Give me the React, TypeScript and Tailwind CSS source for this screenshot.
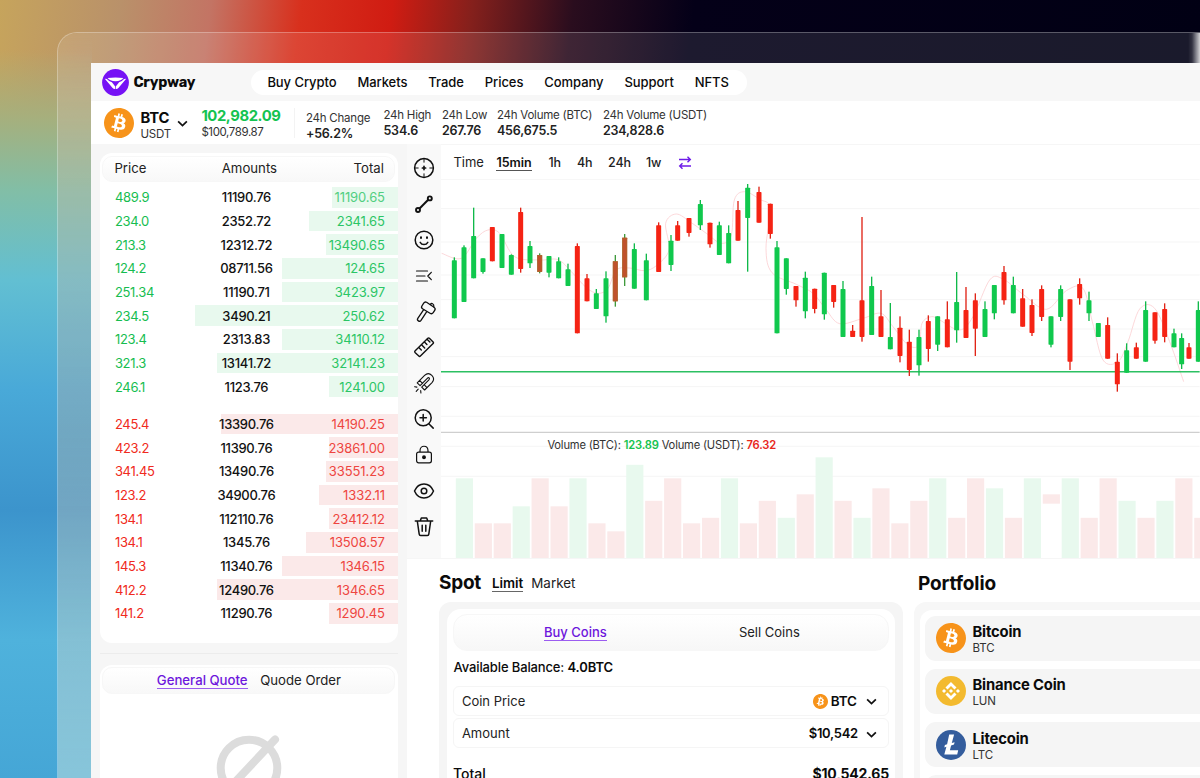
import React from 'react';
import { SiBinance, SiBitcoin } from 'react-icons/si';

type Side = 'g' | 'r' | 'm';

interface Order {
  price: string;
  amount: string;
  total: string;
  depth: number;
}

const navItems = ['Buy Crypto', 'Markets', 'Trade', 'Prices', 'Company', 'Support', 'NFTS'];

const bids: Order[] = [
  { price: '489.9', amount: '11190.76', total: '11190.65', depth: 66 },
  { price: '234.0', amount: '2352.72', total: '2341.65', depth: 89 },
  { price: '213.3', amount: '12312.72', total: '13490.65', depth: 72 },
  { price: '124.2', amount: '08711.56', total: '124.65', depth: 116 },
  { price: '251.34', amount: '11190.71', total: '3423.97', depth: 116 },
  { price: '234.5', amount: '3490.21', total: '250.62', depth: 203 },
  { price: '123.4', amount: '2313.83', total: '34110.12', depth: 116 },
  { price: '321.3', amount: '13141.72', total: '32141.23', depth: 181 },
  { price: '246.1', amount: '1123.76', total: '1241.00', depth: 69 },
];

const asks: Order[] = [
  { price: '245.4', amount: '13390.76', total: '14190.25', depth: 177 },
  { price: '423.2', amount: '11390.76', total: '23861.00', depth: 69 },
  { price: '341.45', amount: '13490.76', total: '33551.23', depth: 72 },
  { price: '123.2', amount: '34900.76', total: '1332.11', depth: 79 },
  { price: '134.1', amount: '112110.76', total: '23412.12', depth: 69 },
  { price: '134.1', amount: '1345.76', total: '13508.57', depth: 92 },
  { price: '145.3', amount: '11340.76', total: '1346.15', depth: 116 },
  { price: '412.2', amount: '12490.76', total: '1346.65', depth: 181 },
  { price: '141.2', amount: '11290.76', total: '1290.45', depth: 69 },
];

// x, high, body top, body bottom, low, side (chart units, 3 per pixel)
const candles: [number, number, number, number, number, Side][] = [
  [44, 247, 256, 430, 430, 'g'], [73, 211, 217, 381, 381, 'g'], [102, 98, 183, 310, 310, 'g'],
  [130, 250, 250, 291, 296, 'g'], [158, 156, 156, 259, 259, 'r'], [187, 177, 177, 279, 279, 'g'],
  [215, 238, 240, 299, 299, 'g'], [243, 98, 111, 282, 293, 'r'], [271, 198, 213, 265, 279, 'g'],
  [300, 235, 240, 291, 295, 'm'], [328, 243, 243, 293, 307, 'g'], [357, 247, 259, 310, 310, 'g'],
  [385, 266, 283, 333, 333, 'g'], [413, 205, 213, 475, 475, 'r'], [442, 297, 310, 379, 379, 'r'],
  [470, 342, 355, 402, 402, 'g'], [499, 289, 310, 424, 443, 'g'], [527, 240, 259, 379, 395, 'm'],
  [555, 177, 188, 307, 333, 'm'], [584, 205, 222, 341, 341, 'g'], [620, 236, 256, 376, 376, 'g'],
  [657, 142, 151, 291, 291, 'r'], [694, 180, 197, 270, 288, 'g'], [714, 138, 151, 197, 197, 'r'],
  [748, 129, 129, 174, 185, 'r'], [782, 75, 87, 151, 165, 'g'], [811, 143, 143, 208, 218, 'r'],
  [839, 140, 151, 240, 240, 'g'], [867, 151, 174, 265, 265, 'g'], [895, 78, 105, 197, 197, 'r'],
  [924, 27, 38, 129, 290, 'g'], [958, 35, 51, 143, 143, 'r'], [992, 86, 86, 177, 191, 'r'],
  [1012, 198, 217, 475, 475, 'g'], [1040, 250, 250, 342, 359, 'g'], [1069, 333, 333, 376, 395, 'r'],
  [1097, 290, 308, 409, 430, 'g'], [1125, 341, 341, 402, 415, 'r'], [1154, 293, 293, 418, 434, 'g'],
  [1182, 330, 330, 381, 398, 'r'], [1210, 318, 342, 486, 486, 'g'], [1239, 450, 467, 486, 486, 'r'],
  [1267, 126, 376, 486, 500, 'r'], [1296, 305, 333, 480, 480, 'g'], [1324, 345, 424, 486, 486, 'r'],
  [1352, 384, 486, 523, 523, 'g'], [1381, 424, 458, 543, 562, 'r'], [1409, 464, 500, 585, 603, 'r'],
  [1438, 464, 486, 571, 602, 'g'], [1466, 421, 438, 522, 560, 'r'], [1494, 424, 424, 509, 528, 'g'],
  [1523, 379, 433, 517, 517, 'r'], [1551, 291, 381, 466, 503, 'g'], [1579, 336, 405, 489, 489, 'r'],
  [1607, 355, 376, 461, 543, 'r'], [1636, 379, 402, 486, 486, 'g'], [1664, 330, 330, 415, 433, 'g'],
  [1693, 273, 291, 376, 389, 'r'], [1721, 305, 330, 415, 415, 'g'], [1749, 342, 370, 455, 455, 'r'],
  [1777, 373, 390, 474, 483, 'r'], [1806, 331, 342, 426, 438, 'r'], [1834, 424, 424, 509, 517, 'g'],
  [1863, 331, 342, 426, 438, 'g'], [1891, 373, 373, 560, 585, 'r'], [1920, 310, 327, 370, 389, 'r'],
  [1948, 350, 376, 415, 438, 'g'], [1976, 444, 444, 486, 486, 'g'], [2004, 427, 450, 551, 551, 'r'],
  [2033, 535, 560, 628, 650, 'r'], [2061, 505, 526, 593, 593, 'g'], [2090, 503, 517, 551, 551, 'r'],
  [2118, 379, 405, 560, 560, 'g'], [2146, 412, 412, 497, 506, 'r'], [2175, 385, 402, 486, 502, 'r'],
  [2203, 461, 475, 517, 517, 'g'], [2226, 475, 489, 568, 582, 'g'], [2248, 504, 517, 551, 551, 'r'],
  [2276, 379, 405, 560, 560, 'g'],
];

const average: [number, number][] = [
  [6, 235], [65, 250], [110, 190], [145, 165], [180, 175], [225, 245], [300, 255], [355, 254], [395, 290],
  [440, 338], [475, 355], [505, 340], [530, 285], [570, 279], [615, 287], [650, 272], [688, 225], [678, 145],
  [710, 117], [755, 143], [800, 175], [845, 205], [875, 180], [884, 75], [915, 50], [960, 73], [992, 100],
  [979, 220], [997, 293], [1070, 328], [1120, 355], [1160, 405], [1200, 446], [1270, 430], [1324, 415],
  [1360, 455], [1405, 510], [1438, 510], [1447, 445], [1475, 425], [1500, 435], [1560, 465], [1600, 425],
  [1650, 315], [1690, 312], [1750, 358], [1820, 403], [1880, 347], [1930, 340], [1958, 440], [1990, 555],
  [2035, 560], [2065, 500], [2100, 402], [2145, 400], [2190, 500], [2232, 620],
];

const volumes: [number, Side][] = [
  [80, 'g'], [35, 'r'], [35, 'r'], [52, 'g'], [80, 'r'], [52, 'r'], [80, 'g'], [35, 'r'], [27, 'r'], [93.5, 'g'],
  [57.5, 'r'], [80, 'r'], [35, 'r'], [40.5, 'r'], [80, 'g'], [35, 'r'], [57.5, 'r'], [40.5, 'g'], [64, 'r'],
  [101, 'g'], [57.5, 'r'], [40.5, 'g'], [70, 'r'], [35, 'r'], [57.5, 'r'], [80, 'g'], [40.5, 'r'], [80, 'r'],
  [70, 'g'], [40.5, 'r'], [80, 'g'], [64, 'r'], [80, 'g'], [40.5, 'r'], [80, 'r'], [57.5, 'g'], [40.5, 'r'],
  [57.5, 'g'], [80, 'r'], [40.5, 'r'],
];

const gridLines = [13, 101, 201, 300, 374, 462, 545, 635, 724, 814, 904];

const candleFill: Record<Side, string> = { g: '#10c84d', r: '#f52314', m: '#c0512c' };
const wickFill: Record<Side, string> = { g: '#10b94a', r: '#e02417', m: '#3f9a3c' };

const smooth = (pts: [number, number][]) =>
  pts.reduce((d, p, i) => {
    if (i === 0) return `M${p[0]} ${p[1]}`;
    const a = pts[i - 2] ?? pts[i - 1];
    const b = pts[i - 1];
    const n = pts[i + 1] ?? p;
    return `${d}C${b[0] + (p[0] - a[0]) / 6} ${b[1] + (p[1] - a[1]) / 6} ${p[0] - (n[0] - b[0]) / 6} ${
      p[1] - (n[1] - b[1]) / 6
    } ${p[0]} ${p[1]}`;
  }, '');

const Chevron: React.FC<{ className?: string }> = ({ className }) => (
  <svg viewBox="0 0 12 8" className={className} fill="none" stroke="#111" strokeWidth="2">
    <path d="M1 1.5 6 6.3 11 1.5" />
  </svg>
);

const Bitcoin: React.FC<{ className: string }> = ({ className }) => (
  <span className={`flex shrink-0 rounded-full bg-[radial-gradient(circle,white_62%,transparent_64%)] text-[#f7931a] ${className}`}>
    <SiBitcoin className="h-full w-full" />
  </span>
);

const Logo = () => (
  <svg viewBox="0 0 27 27" className="h-[27px] w-[27px]">
    <circle cx="13.5" cy="13.5" r="13.4" fill="#7612f5" />
    <g fill="#fff">
      <path d="M5.6 9.1Q13.5 7.9 21.4 9.1 19.4 12.200 13.500 12.200 7.600 12.200 5.600 9.100Z" />
      <path d="M2.800 9.700 4.900 10Q7 12.600 9.900 13.200L13.200 17.400V19.900Q11.600 20 10.400 18.700Z" />
      <path d="M24.200 9.700 22.100 10Q20 12.600 17.100 13.200L13.800 17.400V19.900Q15.400 20 16.600 18.700Z" />
    </g>
  </svg>
);

const OrderRows: React.FC<{ rows: Order[]; side: 'bid' | 'ask' }> = ({ rows, side }) => (
  <div className="flex flex-col gap-[3.1px]">
    {rows.map((row, i) => (
      <div key={i} className="relative flex h-[20.57px] items-center pt-[1.5px] pr-[13px] pl-[15px] text-[13px]">
        <div
          className={`absolute inset-y-0 right-0 ${side === 'bid' ? 'bg-[#e8f9ee]' : 'bg-[#fbe9e9]'}`}
          style={{ width: row.depth }}
        />
        <span className={`relative w-[81.5px] tracking-[-0.3px] ${side === 'bid' ? 'text-[#16bd50]' : 'text-[#f02a20]'}`}>
          {row.price}
        </span>
        <span className="relative w-[100px] text-center font-medium tracking-[-0.3px] text-[#111]">{row.amount}</span>
        <span
          className={`relative flex-1 text-right tracking-[-0.1px] ${side === 'bid' ? 'text-[#2bc565]' : 'text-[#ee4540]'} ${
            side === 'bid' && i === 0 ? 'opacity-80' : ''
          }`}
        >
          {row.total}
        </span>
      </div>
    ))}
  </div>
);

const tools: React.ReactNode[] = [
  <>
    <circle cx="11" cy="11" r="9.4" />
    <path d="M11 1.6v3.6M11 16.8v3.6M1.6 11h3.6M16.8 11h3.6" strokeWidth="1" />
    <path d="M11 9.4v3.2M9.400 11h3.200" strokeWidth="1.7" />
  </>,
  <>
    <path d="M6.8 15.2 15.2 6.8" strokeWidth="2" />
    <circle cx="5" cy="17" r="2" strokeWidth="1.9" />
    <circle cx="16.8" cy="5.4" r="2" strokeWidth="1.9" />
  </>,
  <>
    <circle cx="11" cy="11" r="8.8" />
    <path d="M7.2 13.3c1.7 3 5.9 3 7.6 0" />
    <path d="M8 8.200v.8M14 8.200v.8" strokeWidth="2" />
  </>,
  <path d="M3.500 6h11M3.500 11h8.500M3.500 16h11M18.300 7.300 14.800 11l3.500 3.700" strokeWidth="1.2" />,
  <>
    <path d="M13.600 1.300 21 6.200Q22.900 7.500 21.700 9.400L20.200 11.700Q18.900 13.500 17 12.300L9.500 7.700Q7.900 6.700 8.900 5L10.700 2.200Q11.900.3 13.600 1.300Z" strokeWidth="1.3" />
    <path d="M17.300 3.500C18.300 1.800 21.300 2.400 20.800 5.800M10.700 8.700 4.800 17.300C3.500 19.300 6.600 21.400 8 19.400L13.600 10.900" strokeWidth="1.3" />
  </>,
  <>
    <path d="M2 15.1 14.8 2.3c.5-.5 1.1-.5 1.6 0l3.7 3.7c.5.5.5 1.1 0 1.6L7.4 20.1c-.5.5-1.1.5-1.6 0L2 16.5c-.4-.5-.4-1 0-1.4Z" strokeWidth="1.400" />
    <path d="m6 11.800 2.300 2.300M8.800 9l2.900 2.900M11.700 6.200l2.200 2.200M14.300 3.400l2.600 2.700" strokeWidth="1.400" />
  </>,
  <>
    <path
      d="M4.200 10.800 11.600 3.400C16.600-1.200 23.400 5.600 19 10.600L11.600 18 8.700 15.100 15.900 7.900C17.300 6.300 15.800 4.900 14.300 6.300L7.100 13.700ZM6.600 8.400l2.900 2.900M11.100 12.700l2.900 2.900"
      strokeWidth="1.1"
    />
    <path d="m1.600 14.700 2.300.4M3.200 19.400l2-2.200M7.700 18.600l.2 2.400" strokeWidth="1.1" />
  </>,
  <>
    <circle cx="10.2" cy="9.8" r="8" />
    <path d="m15.8 15.7 4.4 4.4M10.2 6.6v6.4M7 9.8h6.4" />
  </>,
  <>
    <path d="M7 8.200V6.800c0-6.100 8-6.100 8 0v1.400M5.600 8.200h10.800a2 2 0 0 1 2 2v6.600a2 2 0 0 1-2 2H5.600a2 2 0 0 1-2-2v-6.600a2 2 0 0 1 2-2Z" strokeWidth="1.2" />
    <circle cx="11" cy="13.3" r="1.2" fill="#111" />
  </>,
  <>
    <path d="M1.500 11C5.500 1.700 16.500 1.700 20.500 11 16.500 20.300 5.500 20.300 1.500 11Z" />
    <circle cx="11" cy="11" r="2.8" />
  </>,
  <>
    <path d="M2.300 5h17.400M4.300 5l1.900 13.200c.1.900.6 1.300 1.400 1.300h6.800c.8 0 1.300-.4 1.400-1.300L17.700 5M7.300 4.800l1-2.800h5.400l1 2.800" />
    <path d="M9.200 9.200v6M12.800 9.200v6" />
  </>,
];

const Chart = () => (
  <svg viewBox="4 12 2276 1138" className="h-[379.333px] w-[758.667px] shrink-0">
    {gridLines.map((y) => (
      <path key={y} d={`M4 ${y}H2280`} stroke="#f5f5f5" strokeWidth="3" />
    ))}
    <path d="M4 772H2280" stroke="#cfcfcf" strokeWidth="4" />
    {volumes.map(([h, side], i) => (
      <rect
        key={i}
        x={48.5 + i * 56.8}
        y={1150 - h * 3}
        width="51.5"
        height={i === 31 ? 28 : h * 3}
        fill={side === 'g' ? '#e8f9ee' : '#fbe9e9'}
      />
    ))}
    <path d={smooth(average)} fill="none" stroke="#fbd0d2" strokeWidth="2.5" />
    <path d="M4 590H2280" stroke="#2cc062" strokeWidth="4.5" />
    {candles.map(([x, high, top, bottom, low, side]) => (
      <g key={x}>
        <rect x={x - 2} y={high} width="4" height={low - high} fill={wickFill[side]} />
        <rect x={x - 7.5} y={top} width="15" height={bottom - top} rx="2" fill={candleFill[side]} />
        {side === 'm' && (
          <rect x={x - 6.5} y={top + 1} width="13" height={bottom - top - 2} fill="none" stroke="#a9692d" strokeWidth="2" />
        )}
      </g>
    ))}
  </svg>
);

const Stat: React.FC<{ label: string; value: string; className: string }> = ({ label, value, className }) => (
  <div className={`shrink-0 text-[#333] ${className}`}>
    <p className="text-[11.5px] leading-[15px] tracking-[-0.22px]">{label}</p>
    <p className="text-[12.5px] leading-4 font-semibold tracking-[-0.15px] text-[#222]">{value}</p>
  </div>
);

const Header = () => (
  <header className="flex h-[38px] items-center bg-[#f7f7f7] pl-[11px]">
    <Logo />
    <span className="ml-1 w-[118px] pt-px font-['Rubik','Inter',sans-serif] text-[14.5px] font-bold tracking-[-0.2px]">
      Crypway
    </span>
    <nav className="flex h-[25px] w-[496px] items-center gap-[21px] rounded-full bg-white pt-[1.5px] pl-4 text-[13px] font-medium tracking-[-0.07px] whitespace-nowrap">
      {navItems.map((item) => (
        <span key={item}>{item}</span>
      ))}
    </nav>
  </header>
);

const Ticker = () => (
  <div className="flex h-[43px] items-start bg-white pl-[13px] whitespace-nowrap">
    <Bitcoin className="mt-[7px] h-[30px] w-[30px]" />
    <div className="mt-[9px] ml-[6px] w-[37px]">
      <p className="text-[14.8px] leading-4 font-bold tracking-[-0.1px]">BTC</p>
      <p className="pt-px text-[11.5px] leading-[14px] tracking-[-0.2px] text-[#333]">USDT</p>
    </div>
    <Chevron className="mt-[19px] h-[7px] w-[11px]" />
    <div className="mt-[6px] ml-[13px] w-[93px]">
      <p className="text-[14.8px] leading-[19px] font-bold tracking-[-0.4px] text-[#14c350]">102,982.09</p>
      <p className="text-[11.5px] leading-[13px] tracking-[-0.4px] text-[#333]">$100,789.87</p>
    </div>
    <div className="mt-[7px] mr-[10.5px] h-[30px] w-px bg-[#f3f3f3]" />
    <Stat label="24h Change" value="+56.2%" className="mt-[9.5px] w-[77.5px]" />
    <Stat label="24h High" value="534.6" className="mt-[7px] w-[58.5px]" />
    <Stat label="24h Low" value="267.76" className="mt-[7px] w-[55px]" />
    <Stat label="24h Volume (BTC)" value="456,675.5" className="mt-[7px] w-[106px]" />
    <Stat label="24h Volume (USDT)" value="234,828.6" className="mt-[7px]" />
  </div>
);

const Sidebar = () => (
  <aside className="flex w-[316px] shrink-0 flex-col bg-[#f6f6f6] pt-[9px] pr-[9.5px] pl-[8.5px]">
    <section className="h-[490px] shrink-0 overflow-hidden rounded-[12px] bg-white pt-[3px]">
      <div className="mx-[2.5px] flex h-[26px] items-center rounded-[10px] border border-[#f7f7f7] bg-linear-to-b from-white to-[#f8f8f8] pr-[10.5px] pl-[11px] text-[13.2px] text-[#222]">
        <span className="w-[85px]">Price</span>
        <span className="w-[100px] text-center">Amounts</span>
        <span className="flex-1 text-right">Total</span>
      </div>
      <div className="mt-[5px] flex flex-col gap-[17px]">
        <OrderRows rows={bids} side="bid" />
        <OrderRows rows={asks} side="ask" />
      </div>
    </section>
    <div className="mt-[10px] h-px shrink-0 bg-[#ececec]" />
    <section className="mt-[11px] flex h-[130px] shrink-0 flex-col items-center rounded-t-[12px] bg-white pt-[2px]">
      <div className="flex h-[27px] w-[293px] shrink-0 items-center justify-center gap-[12.5px] rounded-[10px] border border-[#f7f7f7] bg-linear-to-b from-white to-[#f8f8f8] text-[13.2px]">
        <span className="border-b border-[#9b5cf0] leading-[15px] font-medium text-[#6d16dc]">General Quote</span>
        <span className="text-[#222]">Quode Order</span>
      </div>
      <svg viewBox="0 0 66 66" className="mt-[41px] h-[66px] w-[66px] shrink-0" fill="none" stroke="#dcdcdc" strokeWidth="8">
        <circle cx="33" cy="33" r="28.3" />
        <path d="M7 60 59 4.5" strokeLinecap="round" />
      </svg>
    </section>
  </aside>
);

const Market = () => (
  <div className="flex h-[414px] shrink-0">
    <div className="flex w-[33.5px] shrink-0 flex-col items-center gap-[13.9px] bg-[#f9f9f9] pt-[13px]">
      {tools.map((tool, i) => (
        <svg
          key={i}
          viewBox="0 0 22 22"
          className="h-[22px] w-[22px] shrink-0 overflow-visible"
          fill="none"
          stroke="#111"
          strokeWidth="1.5"
          strokeLinecap="round"
          strokeLinejoin="round"
        >
          {tool}
        </svg>
      ))}
    </div>
    <div className="relative flex min-w-0 flex-1 flex-col overflow-hidden border-t border-[#f6f6f6] bg-white">
      <div className="flex h-[34px] shrink-0 items-center pt-[2px] pl-[12.5px] text-[12.5px] font-medium text-[#222]">
        <span className="w-[43px] text-[13px] font-normal">Time</span>
        <span className="w-[52px]">
          <span className="border-b border-[#555] font-semibold text-[#111]">15min</span>
        </span>
        <span className="w-[28.5px]">1h</span>
        <span className="w-[31px]">4h</span>
        <span className="w-[38px]">24h</span>
        <span className="w-[32px]">1w</span>
        <svg viewBox="0 0 14 14" className="h-[14px] w-[14px]" fill="none" stroke="#6d1be8" strokeWidth="1.4">
          <path d="M1 3.5h11M9.5.8 12.3 3.5 9.5 6.2M13 10H2M4.5 7.3 1.7 10l2.8 2.7" />
        </svg>
      </div>
      <Chart />
      <p className="absolute top-[293px] left-[106.5px] text-[11.2px] leading-[14px] tracking-[-0.19px] whitespace-nowrap text-[#333]">
        Volume (BTC): <span className="font-semibold text-[#14c350]">123.89</span> Volume (USDT):{' '}
        <span className="font-semibold text-[#e8261c]">76.32</span>
      </p>
    </div>
  </div>
);

const Spot = () => (
  <section className="w-[464px] shrink-0">
    <div className="flex h-[30px] items-center text-[13.4px]">
      <h2 className="w-[53px] text-[19px] font-bold tracking-[-0.2px]">Spot</h2>
      <span className="mr-2 border-b border-[#666] leading-[16px] font-semibold">Limit</span>
      <span className="text-[#222]">Market</span>
    </div>
    <div className="mt-[4px] h-[220px] rounded-t-[12px] bg-[#f5f5f5] px-[8px] pt-[7px]">
      <div className="h-full rounded-t-[14px] bg-white px-[6px] pt-[5px] text-[13px]">
        <div className="flex h-[37px] items-center rounded-[14px] border border-[#f7f7f7] bg-linear-to-b from-white to-[#f7f7f7] pt-px">
          <span className="flex w-[243px] justify-center">
            <span className="border-b border-[#9b5cf0] leading-[15px] font-medium text-[#6d16dc]">Buy Coins</span>
          </span>
          <span className="w-[145px] text-center text-[#222]">Sell Coins</span>
        </div>
        <p className="mt-[6px] h-[20px] pl-[0.7px] leading-[20px] font-medium tracking-[-0.13px]">
          Available Balance: <span className="font-semibold">4.0BTC</span>
        </p>
        <div className="mt-[9px] flex h-[30px] items-center rounded-[6px] border border-[#f5f5f5] pt-px pr-[11px] pl-[8px]">
          <span className="text-[#222]">Coin Price</span>
          <Bitcoin className="mr-[2.5px] ml-auto h-[15px] w-[15px]" />
          <span className="text-[13.4px] font-semibold tracking-[-0.1px]">BTC</span>
          <Chevron className="ml-[9px] h-[7px] w-[11px]" />
        </div>
        <div className="mt-[2px] flex h-[30px] items-center rounded-[6px] border border-[#f5f5f5] pt-[2px] pr-[11px] pl-[8px]">
          <span className="text-[#222]">Amount</span>
          <span className="ml-auto font-semibold tracking-[-0.28px]">$10,542</span>
          <Chevron className="ml-[8px] h-[7px] w-[11px]" />
        </div>
        <div className="mt-[16px] flex items-center justify-between text-[14px] leading-[20px] font-medium">
          <span>Total</span>
          <span className="font-bold tracking-[-0.2px]">$10,542.65</span>
        </div>
      </div>
    </div>
  </section>
);

const holdings = [
  { name: 'Bitcoin', symbol: 'BTC', icon: <Bitcoin className="h-[30px] w-[30px]" /> },
  {
    name: 'Binance Coin',
    symbol: 'LUN',
    icon: (
      <span className="flex h-[30px] w-[30px] items-center justify-center rounded-full bg-[#f3ba2f] text-white">
        <SiBinance className="h-[18px] w-[18px]" />
      </span>
    ),
  },
  {
    name: 'Litecoin',
    symbol: 'LTC',
    icon: (
      <svg viewBox="0 0 30 30" className="h-[30px] w-[30px]">
        <circle cx="15" cy="15" r="15" fill="#345d9d" />
        <path d="M13.2 4.5h4.9l-2.300 8.600 2.800-.9-.6 2.300-2.900 1-1.200 4.700h8.300l-1 4.200H8.300l2.100-7.700-2.100.7.6-2.300 2.200-.8Z" fill="#fff" />
      </svg>
    ),
  },
  { name: '', symbol: '', icon: null },
];

const Portfolio = () => (
  <section className="min-w-0 flex-1">
    <h2 className="h-[30px] pl-[4px] text-[19px] leading-[31px] font-bold tracking-[-0.1px]">Portfolio</h2>
    <div className="mt-[4px] h-[220px] rounded-tl-[12px] bg-[#f7f7f7] pt-[8px] pl-[6.5px]">
      <div className="flex h-full flex-col gap-[7.7px] rounded-tl-[12px] bg-white pt-[5.5px] pl-[5px]">
        {holdings.map((coin) => (
          <div key={coin.name} className="flex h-[45.5px] shrink-0 items-center gap-[6px] rounded-l-[11px] bg-[#f5f5f5] pl-[11px]">
            {coin.icon}
            <div className="pt-[3px]">
              <p className="text-[14.8px] leading-[17px] font-bold tracking-[-0.15px]">{coin.name}</p>
              <p className="text-[11.5px] leading-[14px] tracking-[-0.1px] text-[#333]">{coin.symbol}</p>
            </div>
          </div>
        ))}
      </div>
    </div>
  </section>
);

const App: React.FC = () => {
  return (
    <div className="h-[778px] w-[1200px] overflow-hidden bg-[linear-gradient(180deg,transparent_50px,#a5b07e_120px,#82bea6_190px,#62bfd2_280px,#49a9d8_390px,#3c94cc_510px,#4fb2dc_640px,#45a6d6_778px),linear-gradient(97deg,#c6a45c_0px,#b9916a_120px,#c37464_210px,#d8301d_300px,#d01c12_390px,#84201c_470px,#2a0d1e_570px,#040018_690px,#010014_1200px)] bg-[length:92px_100%,100%_100%] bg-no-repeat pt-[32px] pl-[57px] font-['Inter','Liberation_Sans',sans-serif] text-[#0b0b0b]">
      <div className="h-[760px] rounded-tl-[20px] border-t border-l border-white/35 bg-[linear-gradient(270deg,rgba(255,255,255,0.8)_0px,rgba(255,255,255,0.1)_8px,transparent_12px),linear-gradient(180deg,transparent_0px,rgba(190,165,140,0.28)_60px,rgba(150,150,140,0.35)_400px,rgba(180,220,220,0.5)_778px)] bg-[length:100%_31px,34px_100%] bg-no-repeat">
        <div className="h-full rounded-tl-[20px] bg-white/10 pt-[30px] pl-[33.4px]">
          <div className="flex h-[730px] flex-col bg-white">
            <Header />
            <Ticker />
            <main className="flex min-h-0 flex-1">
              <Sidebar />
              <div className="flex min-w-0 flex-1 flex-col">
                <Market />
                <div className="flex gap-[11px] border-t border-[#f6f6f6] pt-[9px] pl-[31.5px]">
                  <Spot />
                  <Portfolio />
                </div>
              </div>
            </main>
          </div>
        </div>
      </div>
    </div>
  );
};

export default App;
